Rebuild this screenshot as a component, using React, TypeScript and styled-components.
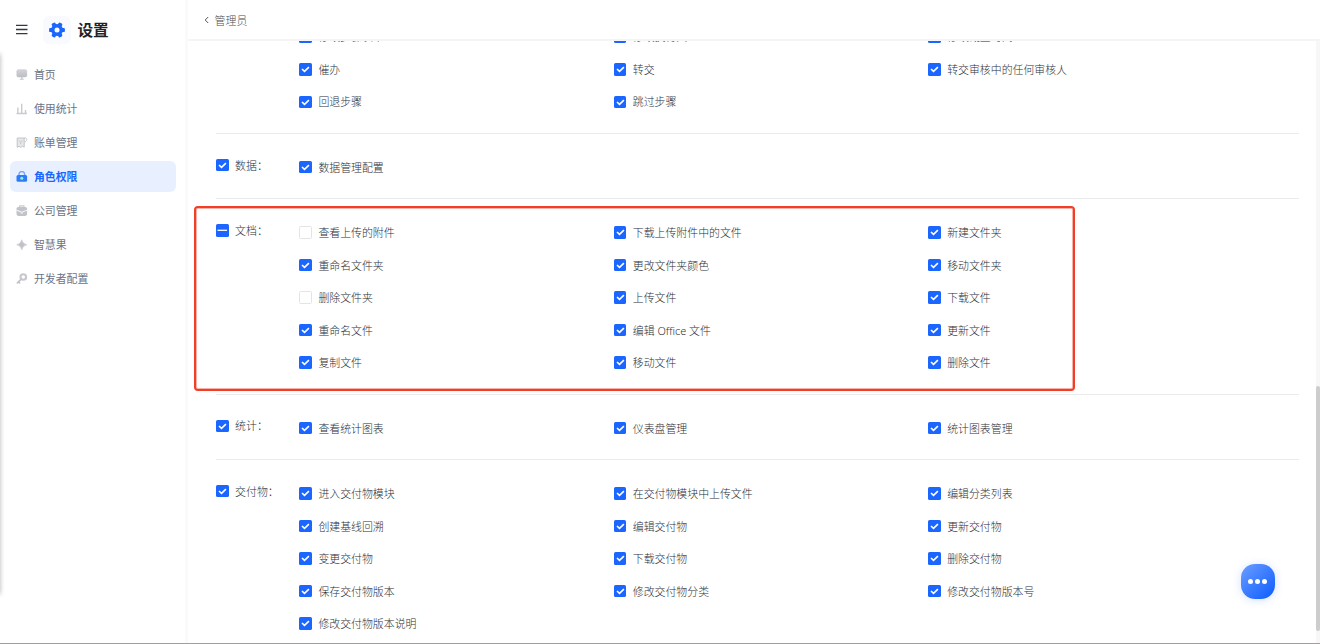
import React from "react";
import styled, { createGlobalStyle, css } from "styled-components";

const Global = createGlobalStyle`
  * { box-sizing: border-box; }
  html, body { margin: 0; padding: 0; overflow: hidden; }
  body {
    background: #fff;
    color: #2c3038;
    font-family: "Noto Sans", "Noto Sans CJK SC", sans-serif;
    font-size: 10.9px;
    font-weight: 300;
    line-height: 16px;
  }
`;

const Page = styled.div`
  position: relative;
  display: flex;
  width: 1320px;
  height: 644px;
  overflow: hidden;
  border-bottom: 1px solid #a09e9e;
`;

const EdgeShadow = styled.div`
  position: absolute;
  left: -10px;
  top: 54px;
  width: 10px;
  height: 540px;
  box-shadow: 0 0 5px rgba(0, 0, 0, 0.3);
`;

const Sidebar = styled.aside`
  flex: none;
  width: 188px;
  border-right: 3px solid #fafafa;
`;

const Brand = styled.div`
  display: flex;
  align-items: center;
  height: 58px;
  padding: 1px 0 0 16px;
`;

const Logo = styled.div`
  display: flex;
  align-items: center;
  justify-content: center;
  width: 28px;
  height: 28px;
  margin: 0 6.5px 0 15px;
  border-radius: 6px;
  background: #f8fafd;
`;

const Title = styled.h1`
  margin: 0;
  padding-top: 1px;
  color: #1f2329;
  font-size: 15.6px;
  font-weight: 700;
  line-height: 24px;
`;

const Nav = styled.nav`
  display: flex;
  flex-direction: column;
  gap: 3px;
  padding: 1px 9px 0 9.6px;
`;

const NavItem = styled.a<{ $active?: boolean }>`
  display: flex;
  align-items: center;
  gap: 6.3px;
  height: 31px;
  padding-left: 6px;
  border-radius: 6px;
  color: #6b7485;
  font-weight: 400;
  ${(p) =>
    p.$active &&
    css`
      color: #1a66ff;
      background: #e8f0ff;
      font-weight: 700;
    `}
`;

const Main = styled.main`
  flex: 1;
  min-width: 0;
  display: flex;
  flex-direction: column;
`;

const Header = styled.header`
  flex: none;
  display: flex;
  align-items: center;
  gap: 5.6px;
  height: 41px;
  padding: 1px 0 0 16px;
  border-bottom: 2px solid #f5f5f6;
  color: #4c4c4c;
`;

const Body = styled.div`
  flex: 1;
  min-height: 0;
  display: flex;
`;

const Scroll = styled.div`
  flex: 1;
  min-width: 0;
  padding: 0 17px 0 28px;
  overflow: hidden;
`;

const ScrollTrack = styled.div`
  flex: none;
  width: 4px;
  padding-top: 345px;
  background: #f7f7f7;
`;

const ScrollThumb = styled.div`
  height: 245px;
  border-radius: 2px;
  background: #cdcdcd;
`;

const Section = styled.section<{ $first?: boolean }>`
  display: flex;
  padding: 17.1px 0 14.7px;
  border-bottom: 1px solid #ebebed;
  ${(p) =>
    p.$first &&
    css`
      margin-top: -20.5px;
      padding-top: 0;
    `}
  &:last-child {
    border-bottom: 0;
  }
`;

const GroupCell = styled.div`
  flex: none;
  width: 83.3px;
  padding-top: 5.5px;
`;

const Options = styled.div`
  display: grid;
  grid-template-columns: repeat(3, 314.4px);
  grid-auto-rows: 32.55px;
  align-items: center;
`;

const Option = styled.label`
  display: flex;
  align-items: center;
  gap: 6.5px;
  white-space: nowrap;
`;

const Box = styled.span<{ $off?: boolean }>`
  flex: none;
  display: flex;
  align-items: center;
  justify-content: center;
  width: 12.6px;
  height: 12.6px;
  border-radius: 1.6px;
  background: ${(p) => (p.$off ? "#fff" : "#1a66ff")};
  border: ${(p) => (p.$off ? "1px solid #e4e4e6" : "0")};
`;

const Text = styled.span`
  padding-top: 1.2px;
`;

const Highlight = styled.div`
  position: absolute;
  left: 194px;
  top: 206px;
  width: 881px;
  height: 185px;
  border: 2px solid #f03e27;
  border-radius: 4px;
  box-shadow: inset 0 0 0 1px rgba(240, 62, 39, 0.4);
`;

const ChatButton = styled.button`
  position: absolute;
  left: 1240.5px;
  top: 564px;
  display: flex;
  align-items: center;
  justify-content: center;
  gap: 2px;
  width: 34.5px;
  height: 35px;
  padding: 0;
  border: 0;
  border-radius: 14px;
  background: linear-gradient(135deg, #669aff 5%, #1a66ff 85%);
  box-shadow: 0 1px 9px rgba(26, 102, 255, 0.2);
`;

const Dot = styled.i`
  width: 5px;
  height: 5px;
  border-radius: 50%;
  background: #fff;
`;

type State = "on" | "off" | "some";

const Check = ({ state }: { state: State }) => (
  <Box $off={state === "off"}>
    {state === "on" && (
      <svg width="12.6" height="12.6" viewBox="0 0 12.6 12.6" fill="none" stroke="#fff" strokeWidth="1.6">
        <path d="M3 6 5.5 8.4 9.9 4.1" />
      </svg>
    )}
    {state === "some" && (
      <svg width="12.6" height="12.6" viewBox="0 0 12.6 12.6" stroke="#fff" strokeWidth="1.3">
        <path d="M1.5 6.3H11.1" />
      </svg>
    )}
  </Box>
);

const icons: Record<string, React.ReactNode> = {
  home: (
    <>
      <rect x="0.5" y="0.3" width="10.6" height="8" rx="2" fill="url(#fade)" />
      <path d="M5.1 8h1.4v1.8h1.3v.9H3.8v-.9h1.3z" fill="#c5c8cd" />
    </>
  ),
  stats: (
    <path d="M.5 10.5h10.5M1.9 10V4.6M5.7 10V.8M9.5 10V7" stroke="#c8cbd0" strokeWidth="1.4" fill="none" />
  ),
  bill: (
    <>
      <path d="M1.2 1h7v9.2L6.4 9.2l-1.8 1.2-1.6-1.2-1.8 1.2z" fill="#e6e8ea" stroke="#bcc0c6" strokeWidth=".9" />
      <path d="M8.2 1c3.4-.8 3.4 3.6.3 3.9" fill="none" stroke="#bcc0c6" strokeWidth=".9" />
      <path d="M3 3.4l1.7 2 1.7-2M4.7 5.4v1.8" fill="none" stroke="#c3c6cb" strokeWidth=".9" />
    </>
  ),
  lock: (
    <>
      <path d="M3 5V3.3a2.8 2.8 0 0 1 5.6 0V5" fill="none" stroke="#76a5ff" strokeWidth="1.4" />
      <rect x=".5" y="4" width="10.6" height="6.8" rx="1.5" fill="#2f7bf5" />
      <circle cx="5.8" cy="7.2" r="1.5" fill="#8ff0dd" />
    </>
  ),
  company: (
    <>
      <path d="M3.6 2.3V.9H8v1.4" fill="none" stroke="#c9ccd1" strokeWidth="1.1" />
      <rect x=".5" y="1.9" width="10.6" height="9" rx="1.8" fill="#c0c3c8" />
      <path d="M.5 5.2 5.8 7.2 11.1 5.2" fill="none" stroke="#fff" strokeWidth=".9" />
      <path d="M4.6 7.4h2.4v1.2H4.6z" fill="#eceef0" />
    </>
  ),
  star: (
    <path d="M5.8.8Q6.5 5 10.8 5.8 6.5 6.6 5.8 10.8 5.1 6.6.8 5.8 5.1 5 5.8.8z" fill="#bfc3c9" stroke="#bfc3c9" strokeWidth=".6" />
  ),
  key: (
    <>
      <circle cx="7.3" cy="4" r="2.8" fill="none" stroke="#c5c8cd" strokeWidth="2.1" />
      <path d="M5.2 6.2 1.4 9.8M2.4 8.7l1.2 1.2" stroke="#c0c4c9" strokeWidth="1.7" strokeLinecap="round" />
    </>
  ),
};

const NavIcon = ({ name }: { name: string }) => (
  <svg width="12" height="12" viewBox="0 0 12 12">
    <defs>
      <linearGradient id="fade" x1="0" y1="0" x2="0" y2="1">
        <stop offset="0" stopColor="#d3d5d9" />
        <stop offset="1" stopColor="#babec4" />
      </linearGradient>
    </defs>
    {icons[name]}
  </svg>
);

const nav: [string, string][] = [
  ["home", "首页"],
  ["stats", "使用统计"],
  ["bill", "账单管理"],
  ["lock", "角色权限"],
  ["company", "公司管理"],
  ["star", "智慧果"],
  ["key", "开发者配置"],
];

const groups: { name?: string; state?: State; items: string[] }[] = [
  { items: ["修改步骤表单", "修改执行人", "修改截止时间", "催办", "转交", "转交审核中的任何审核人", "回退步骤", "跳过步骤"] },
  { name: "数据", items: ["数据管理配置"] },
  {
    name: "文档",
    state: "some",
    items: [
      "查看上传的附件", "下载上传附件中的文件", "新建文件夹",
      "重命名文件夹", "更改文件夹颜色", "移动文件夹",
      "删除文件夹", "上传文件", "下载文件",
      "重命名文件", "编辑 Office 文件", "更新文件",
      "复制文件", "移动文件", "删除文件",
    ],
  },
  { name: "统计", items: ["查看统计图表", "仪表盘管理", "统计图表管理"] },
  {
    name: "交付物",
    items: [
      "进入交付物模块", "在交付物模块中上传文件", "编辑分类列表",
      "创建基线回溯", "编辑交付物", "更新交付物",
      "变更交付物", "下载交付物", "删除交付物",
      "保存交付物版本", "修改交付物分类", "修改交付物版本号",
      "修改交付物版本说明",
    ],
  },
];

const unchecked = new Set(["查看上传的附件", "删除文件夹"]);

export default function App() {
  return (
    <>
      <Global />
      <Page>
        <Sidebar>
          <Brand>
            <svg width="12" height="11" viewBox="0 0 12 11" stroke="#333940" strokeWidth="1.3">
              <path d="M0 1.4h11.5M0 5.5h11.5M0 9.6h11.5" />
            </svg>
            <Logo>
              <svg width="16" height="16" viewBox="0 0 16 16">
                <g fill="#1a66ff">
                  {[0, 60, 120, 180, 240, 300].map((a) => (
                    <rect key={a} x="5.9" y="0.1" width="4.2" height="5" rx="1.2" transform={`rotate(${a + 30} 8 8)`} />
                  ))}
                  <circle cx="8" cy="8" r="6" />
                </g>
                <circle cx="8" cy="8" r="2.5" fill="#f8fafd" />
              </svg>
            </Logo>
            <Title>设置</Title>
          </Brand>
          <Nav>
            {nav.map(([icon, label]) => (
              <NavItem key={icon} $active={icon === "lock"}>
                <NavIcon name={icon} />
                <Text>{label}</Text>
              </NavItem>
            ))}
          </Nav>
        </Sidebar>
        <Main>
          <Header>
            <svg width="5" height="8" viewBox="0 0 5 8" fill="none" stroke="#555" strokeWidth="1">
              <path d="M4.2 1 1.2 4l3 3" />
            </svg>
            <Text>管理员</Text>
          </Header>
          <Body>
            <Scroll>
              {groups.map((g, i) => (
                <Section key={i} $first={i === 0}>
                  <GroupCell>
                    {g.name && (
                      <Option>
                        <Check state={g.state ?? "on"} />
                        <Text>{g.name}：</Text>
                      </Option>
                    )}
                  </GroupCell>
                  <Options>
                    {g.items.map((t) => (
                      <Option key={t}>
                        <Check state={unchecked.has(t) ? "off" : "on"} />
                        <Text>{t}</Text>
                      </Option>
                    ))}
                  </Options>
                </Section>
              ))}
            </Scroll>
            <ScrollTrack>
              <ScrollThumb />
            </ScrollTrack>
          </Body>
        </Main>
        <EdgeShadow />
        <Highlight />
        <ChatButton aria-label="chat">
          <Dot />
          <Dot />
          <Dot />
        </ChatButton>
      </Page>
    </>
  );
}
